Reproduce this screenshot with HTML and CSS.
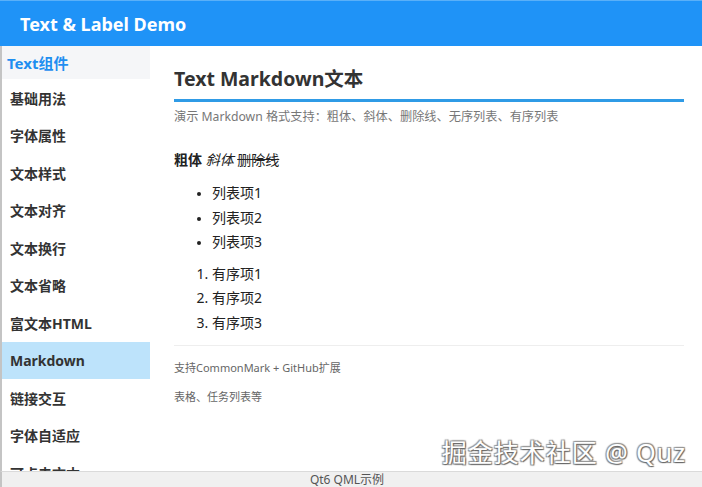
FILE: index.html
```html
<!DOCTYPE html>
<html lang="zh-CN">
<head>
  <meta charset="UTF-8" />
  <title>Text &amp; Label Demo</title>
  <link rel="stylesheet" href="styles.css">
</head>
<body>

<header class="app-bar">
  <h1>Text &amp; Label Demo</h1>
</header>

<div class="main">
  <nav class="sidebar">
    <div class="group-title">Text组件</div>
    <a href="#" class="nav-item">基础用法</a>
    <a href="#" class="nav-item">字体属性</a>
    <a href="#" class="nav-item">文本样式</a>
    <a href="#" class="nav-item">文本对齐</a>
    <a href="#" class="nav-item">文本换行</a>
    <a href="#" class="nav-item">文本省略</a>
    <a href="#" class="nav-item">富文本HTML</a>
    <a href="#" class="nav-item active">Markdown</a>
    <a href="#" class="nav-item">链接交互</a>
    <a href="#" class="nav-item">字体自适应</a>
    <a href="#" class="nav-item">可点击文本</a>
  </nav>

  <section class="content">
    <h2 class="page-title">Text Markdown文本</h2>
    <p class="page-desc">演示 Markdown 格式支持：粗体、斜体、删除线、无序列表、有序列表</p>

    <div class="markdown">
      <p><strong>粗体</strong> <em>斜体</em> <del>删除线</del></p>
      <ul>
        <li>列表项1</li>
        <li>列表项2</li>
        <li>列表项3</li>
      </ul>
      <ol>
        <li>有序项1</li>
        <li>有序项2</li>
        <li>有序项3</li>
      </ol>
    </div>

    <div class="notes">
      <p>支持CommonMark + GitHub扩展</p>
      <p>表格、任务列表等</p>
    </div>

    <div class="watermark">掘金技术社区 @ Quz</div>
  </section>
</div>

<footer class="status-bar">Qt6 QML示例</footer>

</body>
</html>
```

FILE: styles.css
```css
html, body {
  height: 100%;
}

body {
  margin: 0;
  font-family: "Noto Sans", "Noto Sans CJK SC", sans-serif;
  background-color: white;
  color: #333;
  display: flex;
  flex-direction: column;
  overflow: hidden;
}

.app-bar {
  height: 46px;
  flex-shrink: 0;
  background-color: #1f93f7;
  border-top: 1px solid #5ab0f8;
  box-sizing: border-box;
  display: flex;
  align-items: center;
  padding-left: 20px;
}

.app-bar h1 {
  margin: 0;
  font-size: 18px;
  font-weight: bold;
  color: white;
}

.main {
  flex: 1;
  display: flex;
  min-height: 0;
  border-left: 2px solid #c4c4c4;
}

.sidebar {
  width: 148px;
  flex-shrink: 0;
  overflow: hidden;
  display: flex;
  flex-direction: column;
}

.group-title {
  height: 33px;
  flex-shrink: 0;
  background-color: #f5f6f8;
  color: #1f8ef0;
  font-size: 15px;
  font-weight: bold;
  display: flex;
  align-items: center;
  padding-left: 5px;
}

.nav-item {
  height: 37.5px;
  flex-shrink: 0;
  display: flex;
  align-items: center;
  padding-left: 8px;
  font-size: 14px;
  font-weight: bold;
  color: #333;
  text-decoration: none;
}

.nav-item.active {
  background-color: #bde3fb;
}

.content {
  flex: 1;
  position: relative;
  padding: 18px 18px 0 24px;
}

.page-title {
  margin: 0;
  font-size: 19.5px;
  font-weight: bold;
  color: #333;
  line-height: 30px;
  padding-bottom: 5px;
  border-bottom: 3px solid #2f9be6;
}

.page-desc {
  margin: 6px 0 0;
  font-size: 12.2px;
  color: #777;
  line-height: 18px;
}

.markdown {
  font-size: 14px;
  color: #222;
  padding-top: 23px;
  padding-bottom: 10px;
  border-bottom: 1px solid #eeeeee;
}

.markdown p {
  margin: 0 0 10px;
  line-height: 22px;
}

.markdown ul,
.markdown ol {
  margin: 0 0 7px;
  padding-left: 38px;
}

.markdown ul li::marker {
  font-size: 11px;
}

.markdown ol {
  margin-bottom: 0;
}

.markdown li {
  line-height: 24.5px;
}

.notes {
  padding-top: 13px;
  font-size: 11px;
  color: #666;
}

.notes p {
  margin: 0 0 12px;
  line-height: 17px;
}

.watermark {
  position: absolute;
  right: 16px;
  bottom: 2px;
  font-size: 25px;
  color: white;
  letter-spacing: 1px;
  text-shadow: 1px 1px 1px #666, -1px -1px 1px #999, 1px -1px 1px #888, -1px 1px 1px #888;
}

.status-bar {
  height: 15px;
  flex-shrink: 0;
  background-color: #f0f0f0;
  border-top: 1px solid #dadada;
  border-left: 2px solid #c4c4c4;
  font-size: 12px;
  line-height: 16px;
  color: #555;
  text-align: center;
  padding-right: 10px;
  overflow: hidden;
}
```
